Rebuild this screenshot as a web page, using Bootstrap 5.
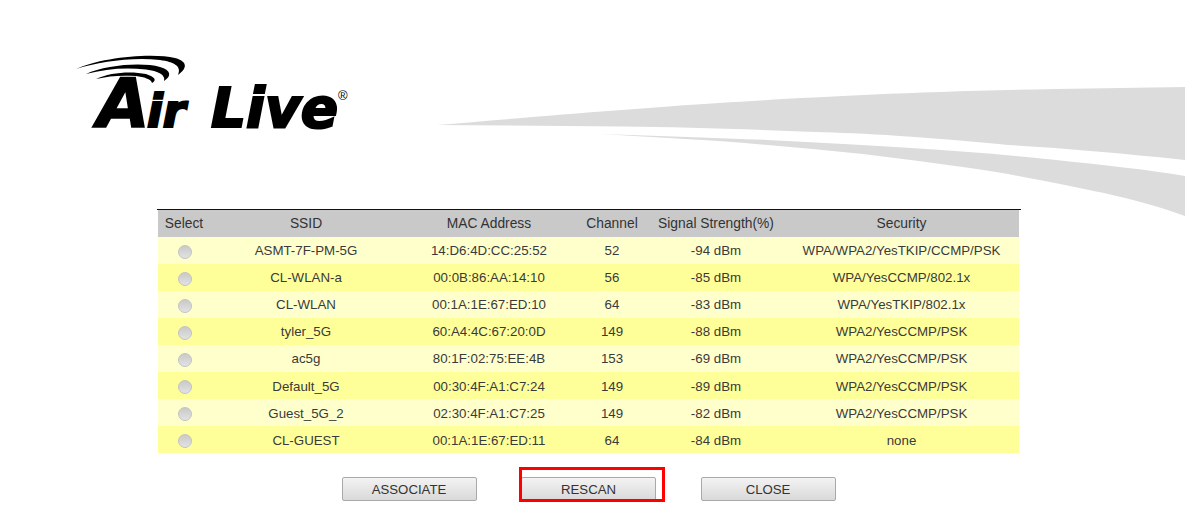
<!DOCTYPE html>
<html lang="en">
<head>
<meta charset="utf-8">
<title>Site Survey</title>
<link href="https://cdn.jsdelivr.net/npm/bootstrap@5.3.0/dist/css/bootstrap.min.css" rel="stylesheet">
<style>
html,body{margin:0;height:516px;overflow:hidden;background:#fff}
body{font-family:"Liberation Sans",Arial,sans-serif;color:#333}
.top-band{height:209px}
.air-logo{display:block;margin-left:70px;margin-top:48px;flex:none;overflow:visible}
.air-logo text{font-family:"DejaVu Sans",sans-serif;font-weight:700;font-style:italic;fill:#000;stroke:#000}
.air-logo .reg{font-family:"Liberation Sans",sans-serif;font-style:normal;font-weight:400;stroke:none}
.swoosh{position:absolute;left:0;top:0;pointer-events:none}
.survey-wrap{width:864px;margin-left:157px;border-top:1px solid #111;padding-left:1px;position:relative}
.survey-table{width:861px;table-layout:fixed;margin:0;font-size:13.3px;--bs-table-bg:transparent;--bs-table-color:#3a3a3a;--bs-border-width:0}
.survey-table th,.survey-table td{padding:0;height:27px;text-align:center;vertical-align:middle;font-weight:400;border:0;box-shadow:none;line-height:1}
.survey-table thead th{background:#c9c9c9;color:#333;font-size:13.8px;padding-top:1px}
.survey-table tbody tr:nth-child(odd) td{background:#ffffcc}
.survey-table tbody tr:nth-child(even) td{background:#ffff99}
.survey-table tbody tr:nth-child(n+6) td{padding-top:2px}
.survey-table tbody tr td:first-child{padding-top:0}
.radio-dot{appearance:none;-webkit-appearance:none;display:block;width:14px;height:14px;margin:2px auto 0 20px;border-radius:50%;border:1px solid #c4c4c4;background:linear-gradient(#c9c9c9,#e2e2e2)}
.action-row{gap:44.5px;margin-top:24px;width:861px;position:relative}
.air-btn{width:135px;height:24px;padding:2px 0 0;border:1px solid #a9a9a9;border-radius:2px;background:linear-gradient(#f3f3f3,#d9d9d9);color:#333;font-size:13.2px;line-height:20px}
.air-btn:hover,.air-btn:disabled{background:linear-gradient(#f3f3f3,#d9d9d9);color:#333;border-color:#a9a9a9}
.rescan-holder{position:relative}
.red-mark{position:absolute;left:-2px;top:-10px;width:146px;height:35px;border:3px solid #f00;pointer-events:none}
</style>
</head>
<body>
<svg class="swoosh" width="1185" height="220" viewBox="0 0 1185 220" aria-hidden="true">
  <path fill="#dcdcdc" d="M437 125C520 118 640 108 719 103C800 98 900 92 1056 89L1185 87V160C1120 153 1060 148 1008 145C930 137 860 133 815 132C740 129 680 127 623 126.500Z"/>
  <path fill="#dcdcdc" d="M601 134C660 136 720 138 767 140C820 143 870 145 911 148C960 151 1010 155 1056 160C1105 165 1150 170 1185 176V216C1160 207 1135 200 1104 193C1075 187 1040 180 1008 174C960 166 910 160 863 154C815 149 770 145 719 141Z"/>
</svg>
<header class="top-band d-flex position-relative">
  <svg class="air-logo" width="295" height="90" viewBox="70 48 295 90" role="img" aria-label="Air Live">
    <path d="M76 69C98 58 152 52 175 58C186 61 189 67 178 75C182 66 174 62 160 60C130 57 100 62 76 69Z"/>
    <path d="M86 74C105 65 142 62 160 67C171 70 172 76 164 81C166 75 158 71 146 69.500C125 67 105 69 86 74Z"/>
    <path d="M96 79C110 72 132 71 146 74C155 77 157 80 152 83C151 79 144 77 136 76C121 75 108 76 96 79Z"/>
    <text x="97" y="127" font-size="68" stroke-width="1.500">A</text>
    <text x="147" y="127" font-size="46" stroke-width="2.200">ir</text>
    <text x="211" y="127" font-size="55" stroke-width="2.200">Live</text>
    <text class="reg" x="338" y="100" font-size="13">®</text>
  </svg>
</header>
<main class="survey-wrap">
  <table class="table survey-table">
    <colgroup><col style="width:52px"><col style="width:192px"><col style="width:174px"><col style="width:72px"><col style="width:136px"><col style="width:235px"></colgroup>
    <thead>
      <tr><th>Select</th><th>SSID</th><th>MAC Address</th><th>Channel</th><th>Signal Strength(%)</th><th>Security</th></tr>
    </thead>
    <tbody>
      <tr><td><input class="radio-dot" type="radio" name="ap" aria-label="Select"></td><td>ASMT-7F-PM-5G</td><td>14:D6:4D:CC:25:52</td><td>52</td><td>-94 dBm</td><td>WPA/WPA2/YesTKIP/CCMP/PSK</td></tr>
      <tr><td><input class="radio-dot" type="radio" name="ap" aria-label="Select"></td><td>CL-WLAN-a</td><td>00:0B:86:AA:14:10</td><td>56</td><td>-85 dBm</td><td>WPA/YesCCMP/802.1x</td></tr>
      <tr><td><input class="radio-dot" type="radio" name="ap" aria-label="Select"></td><td>CL-WLAN</td><td>00:1A:1E:67:ED:10</td><td>64</td><td>-83 dBm</td><td>WPA/YesTKIP/802.1x</td></tr>
      <tr><td><input class="radio-dot" type="radio" name="ap" aria-label="Select"></td><td>tyler_5G</td><td>60:A4:4C:67:20:0D</td><td>149</td><td>-88 dBm</td><td>WPA2/YesCCMP/PSK</td></tr>
      <tr><td><input class="radio-dot" type="radio" name="ap" aria-label="Select"></td><td>ac5g</td><td>80:1F:02:75:EE:4B</td><td>153</td><td>-69 dBm</td><td>WPA2/YesCCMP/PSK</td></tr>
      <tr><td><input class="radio-dot" type="radio" name="ap" aria-label="Select"></td><td>Default_5G</td><td>00:30:4F:A1:C7:24</td><td>149</td><td>-89 dBm</td><td>WPA2/YesCCMP/PSK</td></tr>
      <tr><td><input class="radio-dot" type="radio" name="ap" aria-label="Select"></td><td>Guest_5G_2</td><td>02:30:4F:A1:C7:25</td><td>149</td><td>-82 dBm</td><td>WPA2/YesCCMP/PSK</td></tr>
      <tr><td><input class="radio-dot" type="radio" name="ap" aria-label="Select"></td><td>CL-GUEST</td><td>00:1A:1E:67:ED:11</td><td>64</td><td>-84 dBm</td><td>none</td></tr>
    </tbody>
  </table>
  <div class="d-flex justify-content-center action-row">
    <button type="button" class="btn air-btn">ASSOCIATE</button>
    <div class="rescan-holder d-flex"><button type="button" class="btn air-btn">RESCAN</button><span class="red-mark"></span></div>
    <button type="button" class="btn air-btn">CLOSE</button>
  </div>
</main>
<script src="https://cdn.jsdelivr.net/npm/bootstrap@5.3.0/dist/js/bootstrap.bundle.min.js"></script>
</body>
</html>
